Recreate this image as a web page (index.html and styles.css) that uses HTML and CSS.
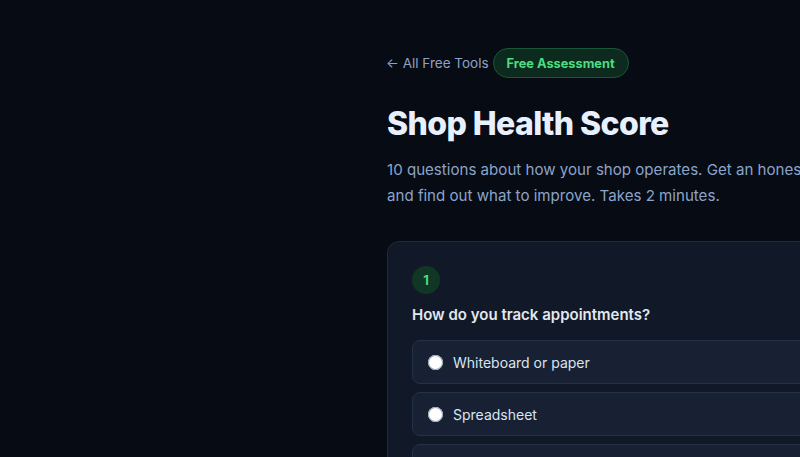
FILE: index.html
```html
<!DOCTYPE html>
<html lang="en">
<head>
<meta charset="utf-8">
<title>Shop Health Score</title>
<link rel="stylesheet" href="styles.css">
</head>
<body>
<main class="page">
  <div class="topline">
    <a class="back" href="#">← All Free Tools</a>
    <span class="tag">Free Assessment</span>
  </div>
  <h1 class="title">Shop Health Score</h1>
  <p class="lead">10 questions about how your shop operates. Get an honest score and find out what to improve. Takes 2 minutes.</p>
  <section class="card">
    <div class="num">1</div>
    <h2 class="question">How do you track appointments?</h2>
    <div class="options">
      <label class="option"><span class="radio"></span><span>Whiteboard or paper</span></label>
      <label class="option"><span class="radio"></span><span>Spreadsheet</span></label>
      <label class="option"><span class="radio"></span><span>Shop management software</span></label>
    </div>
  </section>
</main>
</body>
</html>
```
FILE: styles.css
```css
html, body {
  margin: 0;
  padding: 0;
  background: #060b14;
  overflow: hidden;
  height: 100%;
}
body {
  font-family: Inter, "Noto Sans", sans-serif;
  color: #e2e8f0;
}
.page {
  margin-left: 387px;
  width: 720px;
  padding-top: 48px;
}
.topline {
  display: flex;
  align-items: center;
  gap: 4px;
  height: 30px;
}
.back {
  color: #8ea2c4;
  font-size: 13.5px;
  text-decoration: none;
  margin-left: -1px;
}
.tag {
  display: inline-flex;
  align-items: center;
  height: 28px;
  padding: 0 13px;
  border-radius: 999px;
  background: #0d2a1e;
  border: 1px solid #1d5537;
  color: #4ade80;
  font-size: 12.8px;
  font-weight: 700;
}
.title {
  margin: 26px 0 0;
  font-size: 32px;
  line-height: 40px;
  font-weight: 800;
  letter-spacing: -0.6px;
  color: #e8f0fe;
}
.lead {
  margin: 13px 0 0;
  font-size: 15.1px;
  line-height: 26px;
  color: #8da4c8;
  width: 477px;
}
.card {
  margin-top: 32px;
  background: #111827;
  border: 1px solid #1f2a3c;
  border-radius: 12px;
  padding: 24px;
}
.num {
  width: 28px;
  height: 28px;
  border-radius: 50%;
  background: #113626;
  color: #4ade80;
  font-size: 13px;
  font-weight: 700;
  display: flex;
  align-items: center;
  justify-content: center;
}
.question {
  margin: 10px 0 14px;
  font-size: 15px;
  line-height: 22px;
  font-weight: 600;
  color: #e2e8f0;
}
.options {
  display: flex;
  flex-direction: column;
  gap: 8px;
}
.option {
  display: flex;
  align-items: center;
  gap: 10px;
  height: 42px;
  padding: 0 15px;
  background: #172133;
  border: 1px solid #243149;
  border-radius: 8px;
  font-size: 14px;
  color: #dbe4f0;
}
.radio {
  width: 15px;
  height: 15px;
  border-radius: 50%;
  background: #ffffff;
  box-shadow: 0 0 0 1px #9aa4b2 inset;
  flex: none;
}
```
